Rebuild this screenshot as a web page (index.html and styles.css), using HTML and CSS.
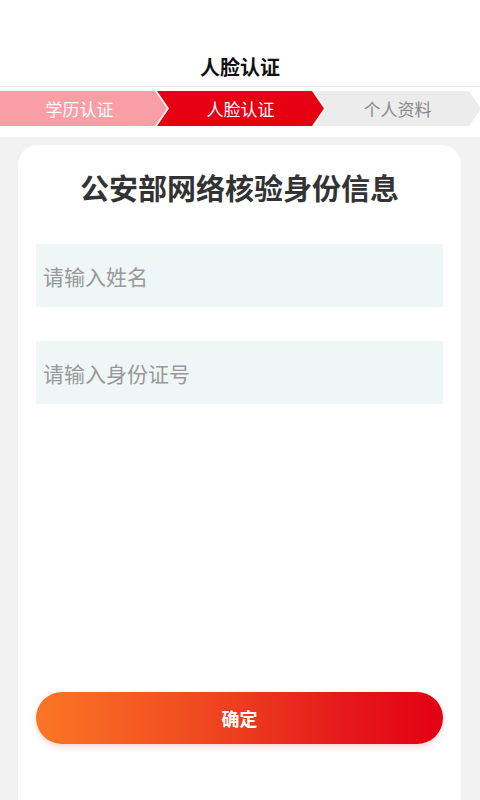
FILE: index.html
```html
<!DOCTYPE html>
<html lang="zh">
<head>
<meta charset="utf-8">
<title>人脸认证</title>
<link rel="stylesheet" href="styles.css">
</head>
<body>
<div class="page">
  <header class="topbar">
    <h1 class="topbar-title">人脸认证</h1>
  </header>
  <nav class="steps">
    <div class="step step-done">学历认证</div>
    <div class="step step-active">人脸认证</div>
    <div class="step step-todo">个人资料</div>
  </nav>
  <main class="content">
    <section class="card">
      <h2 class="card-title">公安部网络核验身份信息</h2>
      <div class="fields">
        <input class="field" type="text" placeholder="请输入姓名">
        <input class="field" type="text" placeholder="请输入身份证号">
      </div>
      <button class="submit" type="button">确定</button>
    </section>
  </main>
</div>
</body>
</html>
```

FILE: styles.css
```css
* { box-sizing: border-box; }
html, body { margin: 0; padding: 0; }
body {
  font-family: "Noto Sans CJK SC", "Noto Sans", sans-serif;
  background: #f2f2f2;
  width: 480px;
  height: 800px;
  overflow: hidden;
}
.page {
  display: flex;
  flex-direction: column;
  height: 800px;
}
.topbar {
  background: #fff;
  height: 87px;
  border-bottom: 1px solid #ebebeb;
  display: flex;
  align-items: flex-end;
  justify-content: center;
  padding-bottom: 5px;
}
.topbar-title {
  margin: 0;
  font-size: 20px;
  font-weight: 700;
  color: #111;
  line-height: 28px;
}
.steps {
  background: #fff;
  display: flex;
  padding: 4px 0 11px;
}
.step {
  width: 167px;
  flex: 0 0 167px;
  height: 35px;
  display: flex;
  align-items: center;
  justify-content: center;
  font-size: 17px;
  line-height: 1;
}
.step + .step { margin-left: -10px; }
.step-done {
  background: #fa9ea6;
  color: #fff;
  padding-right: 8px;
  clip-path: polygon(0 0, calc(100% - 12px) 0, 100% 50%, calc(100% - 12px) 100%, 0 100%);
}
.step-active {
  background: #e50012;
  color: #fff;
  clip-path: polygon(0 0, calc(100% - 12px) 0, 100% 50%, calc(100% - 12px) 100%, 0 100%, 12px 50%);
}
.step-todo {
  background: #ececec;
  color: #888;
  clip-path: polygon(0 0, calc(100% - 12px) 0, 100% 50%, calc(100% - 12px) 100%, 0 100%, 12px 50%);
}
.content {
  flex: 1;
  padding: 8px 19px 0 18px;
  display: flex;
}
.card {
  flex: 1;
  background: #fff;
  border-radius: 20px 20px 0 0;
  padding: 22px 18px 0;
  display: flex;
  flex-direction: column;
}
.card-title {
  margin: 0;
  text-align: center;
  font-size: 29px;
  font-weight: 600;
  color: #333;
  line-height: 40px;
}
.fields {
  display: flex;
  flex-direction: column;
  gap: 34px;
  margin-top: 37px;
}
.field {
  display: block;
  width: 100%;
  height: 63px;
  border: none;
  outline: none;
  background: #eef6f6;
  padding: 0 7px;
  font-family: inherit;
  font-size: 21px;
  color: #333;
}
.field::placeholder { color: #999; }
.submit {
  margin-top: 288px;
  height: 52px;
  width: 100%;
  border: none;
  border-radius: 26px;
  background: linear-gradient(90deg, #fb7625 0%, #f04a20 40%, #e51a1c 75%, #e30012 100%);
  box-shadow: 0 3px 6px rgba(200, 40, 20, 0.18);
  color: #fff;
  font-family: inherit;
  font-size: 18px;
  font-weight: 700;
}
```
